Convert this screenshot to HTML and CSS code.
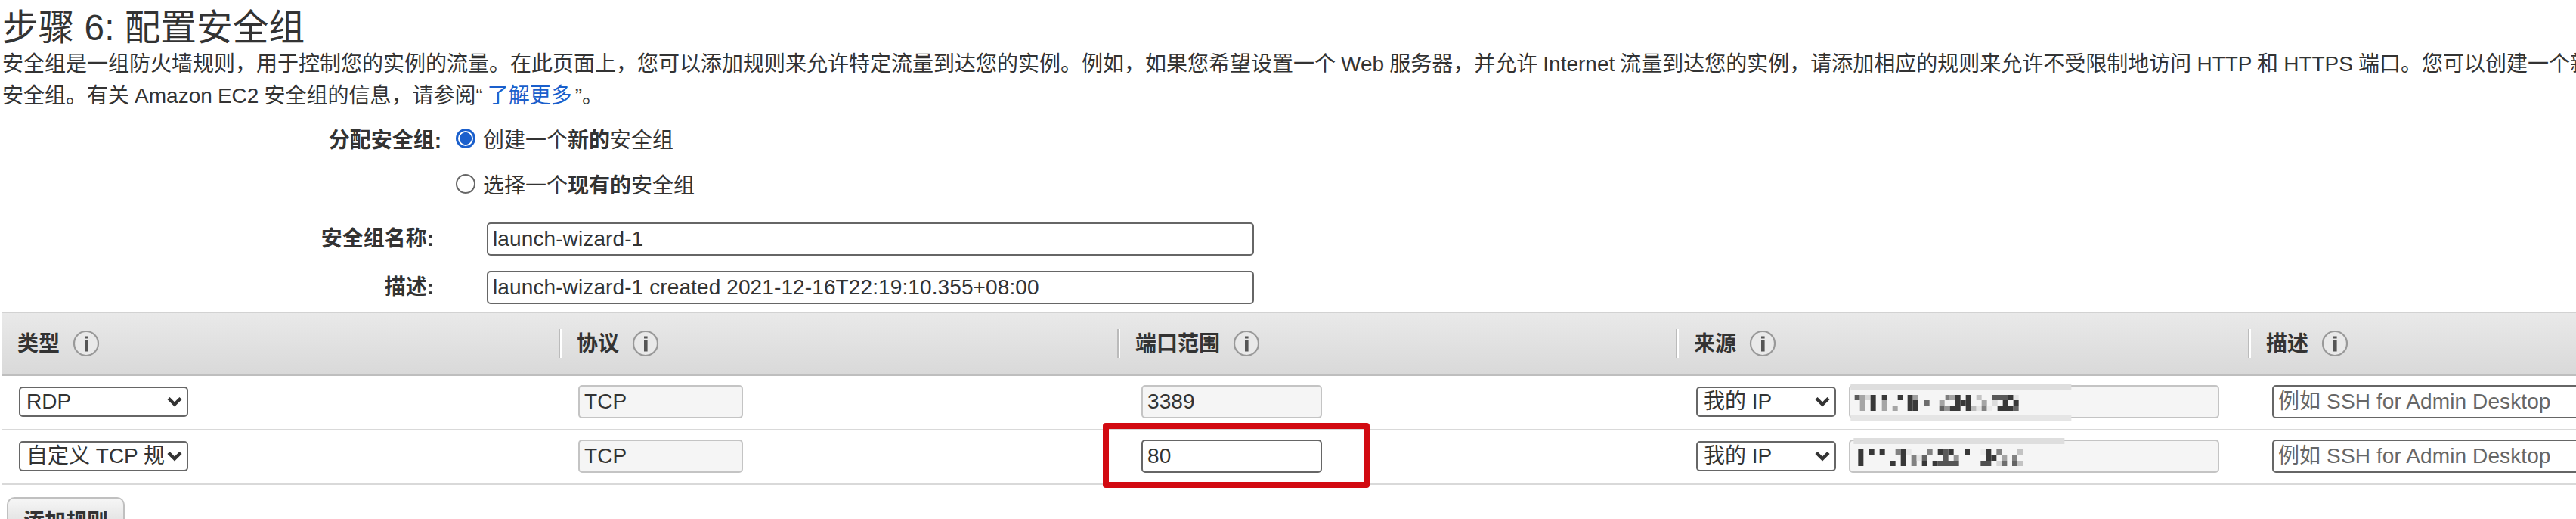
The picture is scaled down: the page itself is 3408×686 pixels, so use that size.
FILE: index.html
```
<!DOCTYPE html>
<html lang="zh-CN">
<head>
<meta charset="utf-8">
<title>配置安全组</title>
<link rel="stylesheet" href="styles.css">
</head>
<body>
<svg class="defs" width="0" height="0" aria-hidden="true">
  <symbol id="info" viewBox="0 0 36 36">
    <circle cx="18" cy="18" r="16" fill="#e9e9e9" stroke="#999" stroke-width="2.2"/>
    <rect x="16" y="8.5" width="4.6" height="3" fill="#555"/>
    <rect x="16" y="14" width="4.6" height="14.5" fill="#555"/>
  </symbol>
  <symbol id="chevron" viewBox="0 0 20 14">
    <path d="M2 2.5 L10 10.5 L18 2.5" fill="none" stroke="#333" stroke-width="4.4"/>
  </symbol>
</svg>
<main class="page">
  <h1 class="title">步骤 6: 配置安全组</h1>
  <p class="intro">安全组是一组防火墙规则，用于控制您的实例的流量。在此页面上，您可以添加规则来允许特定流量到达您的实例。例如，如果您希望设置一个 Web 服务器，并允许 Internet 流量到达您的实例，请添加相应的规则来允许不受限制地访问 HTTP 和 HTTPS 端口。您可以创建一个新<br>安全组。有关 Amazon EC2 安全组的信息，请参阅“<a class="link">了解更多</a>”。</p>

  <section class="form">
    <div class="choice">
      <span class="label">分配安全组:</span>
      <span class="radio checked"></span>
      <span>创建一个<b>新的</b>安全组</span>
    </div>
    <div class="choice">
      <span class="label"></span>
      <span class="radio"></span>
      <span>选择一个<b>现有的</b>安全组</span>
    </div>
    <div class="field">
      <span class="label">安全组名称:</span>
      <div class="input">launch-wizard-1</div>
    </div>
    <div class="field">
      <span class="label">描述:</span>
      <div class="input">launch-wizard-1 created 2021-12-16T22:19:10.355+08:00</div>
    </div>
  </section>

  <section class="table">
    <div class="row head">
      <div class="th">类型<svg class="info"><use href="#info"/></svg></div>
      <div class="th">协议<svg class="info"><use href="#info"/></svg></div>
      <div class="th">端口范围<svg class="info"><use href="#info"/></svg></div>
      <div class="th">来源<svg class="info"><use href="#info"/></svg></div>
      <div class="th">描述<svg class="info"><use href="#info"/></svg></div>
    </div>
    <div class="row">
      <div class="td type"><div class="select"><span>RDP</span><svg class="chev"><use href="#chevron"/></svg></div></div>
      <div class="td proto"><div class="input off">TCP</div></div>
      <div class="td port"><div class="input off">3389</div></div>
      <div class="td source">
        <div class="select"><span>我的 IP</span><svg class="chev"><use href="#chevron"/></svg></div>
        <div class="input off"><svg class="mosaic" id="m1"></svg></div>
      </div>
      <div class="td desc"><div class="input hint">例如 SSH for Admin Desktop</div></div>
    </div>
    <div class="row">
      <div class="td type"><div class="select"><span>自定义 TCP 规</span><svg class="chev"><use href="#chevron"/></svg></div></div>
      <div class="td proto"><div class="input off">TCP</div></div>
      <div class="td port"><div class="input">80</div><div class="mark"></div></div>
      <div class="td source">
        <div class="select"><span>我的 IP</span><svg class="chev"><use href="#chevron"/></svg></div>
        <div class="input off"><svg class="mosaic" id="m2"></svg></div>
      </div>
      <div class="td desc"><div class="input hint">例如 SSH for Admin Desktop</div></div>
    </div>
  </section>
  <div class="button">添加规则</div>
</main>
<script src="mosaic.js"></script>
</body>
</html>
```
FILE: styles.css
```
* { box-sizing: border-box; }
html, body { margin: 0; height: 686px; overflow: hidden; }
body {
  background: #fff;
  color: #333;
  font: 28px/42px "Liberation Sans", "Noto Sans CJK SC", sans-serif;
}
.defs { position: absolute; }
.page { padding-left: 3px; white-space: nowrap; }
.title { margin: 0; padding-top: 7px; height: 64px; font-size: 47.7px; line-height: 60px; font-weight: 400; }
.intro { margin: 0; height: 84px; word-spacing: -0.7px; }
.link { color: #1a5fcc; margin: 0 4px 0 6px; }

.form { height: 265px; padding-top: 16px; }
.choice { display: flex; align-items: center; height: 60px; padding-bottom: 16px; }
.choice .label { width: 581px; margin-right: 19px; }
.label { font-weight: 700; text-align: right; }
.radio { width: 26px; height: 26px; margin-right: 10px; border: 2px solid #666; border-radius: 50%; position: relative; top: -3px; }
.radio.checked { border: 3px solid #1a5fcc; background: radial-gradient(circle, #1a5fcc 7.6px, #fff 8.4px); }
.field { display: flex; align-items: center; height: 64px; }
.choice + .field { margin-top: 0; padding-top: 0; }
.field .label { width: 571px; margin-right: 70px; }
.field .input { width: 1015px; }

.input {
  height: 44px; flex: none;
  padding: 0 6px;
  border: 2px solid #666; border-radius: 5px;
  background: #fff;
  line-height: 40px;
  letter-spacing: 0.11px;
  position: relative;
}
.off { border-color: #c4c4c4; background: #f5f5f5; }
.hint { color: #666; }
.select {
  display: flex; align-items: center; flex: none;
  width: 224px; height: 40px;
  padding: 0 6px 0 8px;
  border: 2px solid #666; border-radius: 5px;
  background: #fff;
  line-height: 36px;
}
.select span { flex: 1; }
.chev { width: 20px; height: 14px; flex: none; }

.row {
  display: grid;
  grid-template-columns: 738px 739px 739px 757px 1fr;
  height: 72px;
  border-bottom: 2px solid #d9d9d9;
}
.head {
  height: 84px;
  border-top: 1px solid #d2d2d2;
  border-bottom-color: #bebebe;
  background: linear-gradient(#e9e9e9, #d9d9d9);
  font-weight: 700;
}
.th { display: flex; align-items: center; height: 38px; margin-top: 21px; padding: 2px 0 0 20px; border-left: 2px solid #fff; box-shadow: -2px 0 #bbb; }
.th:first-child { border: 0; box-shadow: none; }
.th svg { width: 36px; height: 36px; margin-left: 17px; position: relative; top: -1px; }
.td { display: flex; align-items: center; position: relative; padding-bottom: 2px; }
.type { padding-left: 22px; }
.proto { padding-left: 24px; }
.proto .input { width: 218px; }
.port { padding-left: 30px; }
.port .input { width: 239px; }
.source { padding-left: 25px; gap: 17px; }
.source .select { width: 185px; }
.source .input { width: 490px; }
.desc { padding-left: 30px; }
.desc .input { width: 440px; }

/* blurred-out address */
.mosaic { position: absolute; left: -1px; top: -4px; width: 300px; height: 52px; }
/* callout around the edited port */
.mark { position: absolute; left: -21px; top: -10px; width: 353px; height: 86px; border: 8px solid #d20a11; border-radius: 4px; z-index: 1; }

.button {
  width: 156px; height: 50px;
  margin: 16px 0 0 6px;
  border: 2px solid #c0c0c0; border-radius: 10px;
  background: linear-gradient(#f6f6f6, #dadada);
  font-weight: 700; text-align: center; line-height: 62px;
}
```
FILE: mosaic.js
```
// Each entry: x, y, width, height, grey level (thirds of a pixel for geometry).
const cells = {
  m1: [
    [4,0,876,21,222],[4,123,876,21,229],
    [20,42,21,21,90],[41,42,21,63,165],[62,42,21,21,215],[83,42,21,63,56],
    [128,42,21,21,56],[128,63,21,42,165],[170,84,21,21,165],[191,42,21,21,56],
    [230,42,21,63,56],[251,42,21,21,160],[251,63,21,42,56],[296,63,21,21,110],
    [356,63,21,21,165],[356,84,21,21,100],[380,42,18,21,125],[398,42,21,21,165],[377,84,21,21,150],
    [398,84,21,21,56],[419,42,21,63,56],[440,63,21,21,56],[461,42,21,63,56],[482,84,21,21,190],
    [503,42,21,21,195],[503,84,21,21,230],[524,63,21,21,165],[524,84,21,21,130],[545,84,21,21,235],
    [566,42,63,21,90],[566,63,21,21,220],[608,63,21,21,56],[587,84,42,21,56],
    [629,42,21,21,56],[629,84,21,21,56],[650,42,21,21,228],[650,63,21,21,56],[650,84,21,21,100]
  ],
  m2: [
    [16,-3,837,24,222],
    [34,42,21,66,56],[77,42,21,21,56],[119,42,21,21,56],[161,87,21,21,56],
    [182,42,21,21,130],[203,42,21,66,56],[224,42,21,21,230],[245,63,21,45,130],[266,63,21,24,230],
    [287,63,21,24,100],[287,87,21,21,56],[308,42,21,21,130],
    [350,42,21,21,56],[371,42,21,45,90],[392,42,21,21,56],[329,87,21,21,56],[350,87,84,21,85],[413,63,21,24,150],
    [456,42,21,21,56],[520,42,21,21,235],[541,42,21,45,56],[562,63,21,24,56],[520,87,42,21,80],
    [583,42,21,21,130],[604,63,21,24,165],[583,87,21,21,215],[604,87,21,21,110],
    [645,63,21,24,130],[645,87,21,21,100],[666,42,21,21,195],[666,87,21,21,195]
  ]
};
for (const [id, list] of Object.entries(cells)) {
  const svg = document.getElementById(id);
  svg.setAttribute('viewBox', '0 -3 900 156');
  svg.innerHTML = list.map(([x, y, w, h, g]) =>
    `<rect x="${x}" y="${y}" width="${w}" height="${h}" fill="rgb(${g},${g},${g})"/>`).join('');
}
```
